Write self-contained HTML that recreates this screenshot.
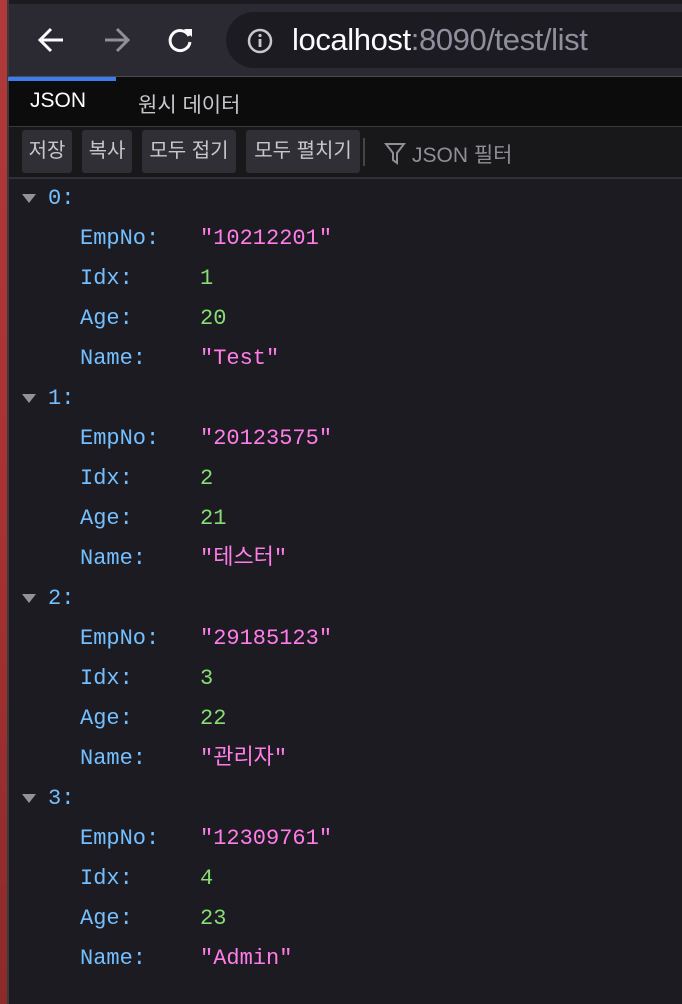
<!DOCTYPE html>
<html><head><meta charset="utf-8"><style>
*{margin:0;padding:0;box-sizing:border-box}
body{width:682px;height:1004px;background:#1c1b22;position:relative;overflow:hidden;font-family:"Liberation Sans","Noto Sans CJK KR",sans-serif}
.red{position:absolute;left:0;top:0;width:7px;height:1004px;background:linear-gradient(#b03a3a,#a83232 50%,#8c2a2a)}
.redl{position:absolute;left:7px;top:0;width:2px;height:1004px;background:#3a3a3e}
.top{position:absolute;left:9px;top:0;right:0;height:4px;background:#1c1b20}
.tb{position:absolute;left:9px;top:4px;right:0;height:72px;background:#2b2a33}
.url{position:absolute;left:226px;top:12px;width:500px;height:56px;border-radius:28px;background:#1c1b22}
.urltxt{position:absolute;left:292px;top:22px;font-size:31px;color:#fbfbfe;letter-spacing:-0.4px}
.urltxt span{color:#8f8f9d}
.sep1{position:absolute;left:9px;top:76px;right:0;height:1px;background:#4a4a50}
.tabs{position:absolute;left:9px;top:77px;right:0;height:49px;background:#0c0c0d}
.blue{position:absolute;left:8px;top:77px;width:108px;height:4px;background:#3c7bf0}
.tab{position:absolute;top:89px;font-size:21px}
.sep2{position:absolute;left:9px;top:126px;right:0;height:1px;background:#38383d}
.tools{position:absolute;left:9px;top:127px;right:0;height:50px;background:#18181b}
.btn{position:absolute;top:130px;height:43px;background:#2f2f35;border-radius:3px;color:#c8c8cc;font-size:20px;line-height:43px;text-align:center;white-space:nowrap}
.sep3{position:absolute;left:9px;top:177px;right:0;height:2px;background:#303036}
.row{position:absolute;font-family:"Liberation Mono","Noto Sans CJK KR",monospace;font-size:22px;line-height:24px}
.k{color:#75bfff}.s{color:#ff7de9}.n{color:#86de74}
.tri{position:absolute;width:0;height:0;border-left:7px solid transparent;border-right:7px solid transparent;border-top:9px solid #939395}
</style></head><body>
<div class="red"></div><div class="redl"></div><div class="top"></div>
<div class="tb"></div>
<svg style="position:absolute;left:36px;top:24px" width="32" height="32" viewBox="0 0 32 32"><path d="M27 16H5M15 5L4 16l11 11" stroke="#fbfbfe" stroke-width="3" fill="none"/></svg>
<svg style="position:absolute;left:100px;top:24px" width="32" height="32" viewBox="0 0 32 32"><path d="M5 16h22M17 5l11 11-11 11" stroke="#8f8f95" stroke-width="3" fill="none"/></svg>
<svg style="position:absolute;left:164px;top:24px" width="32" height="32" viewBox="0 0 32 32"><path d="M25 12A10 10 0 1 0 26 18" stroke="#fbfbfe" stroke-width="3" fill="none"/><path d="M20 5h8v8z" fill="#fbfbfe"/></svg>
<div class="url"></div>
<svg style="position:absolute;left:246px;top:27px" width="28" height="28" viewBox="0 0 28 28"><circle cx="14" cy="14" r="11" stroke="#c8c8cc" stroke-width="2.5" fill="none"/><rect x="12.6" y="12" width="2.8" height="8" fill="#c8c8cc"/><circle cx="14" cy="8.5" r="1.6" fill="#c8c8cc"/></svg>
<div class="urltxt">localhost<span>:8090/test/list</span></div>
<div class="sep1"></div>
<div class="tabs"></div><div class="blue"></div>
<div class="tab" style="left:30px;color:#fff">JSON</div>
<div class="tab" style="left:138px;color:#c8c8cc">원시 데이터</div>
<div class="sep2"></div><div class="tools"></div>
<div class="btn" style="left:22px;width:50px">저장</div>
<div class="btn" style="left:82px;width:50px">복사</div>
<div class="btn" style="left:142px;width:94px">모두 접기</div>
<div class="btn" style="left:246px;width:114px">모두 펼치기</div>
<div style="position:absolute;left:363px;top:138px;width:2px;height:28px;background:#444"></div>
<svg style="position:absolute;left:384px;top:142px" width="22" height="24" viewBox="0 0 22 24"><path d="M2 2h18l-7 9v10l-4-3v-7z" stroke="#8f8f95" stroke-width="2" fill="none"/></svg>
<div style="position:absolute;left:412px;top:139px;font-size:21px;color:#8f8f95">JSON 필터</div>
<div class="sep3"></div>

<div class="tri" style="left:22px;top:194px"></div><div class="row k" style="left:48px;top:187px">0:</div>
<div class="row k" style="left:80px;top:227px">EmpNo:</div><div class="row s" style="left:200px;top:227px">"10212201"</div>
<div class="row k" style="left:80px;top:267px">Idx:</div><div class="row n" style="left:200px;top:267px">1</div>
<div class="row k" style="left:80px;top:307px">Age:</div><div class="row n" style="left:200px;top:307px">20</div>
<div class="row k" style="left:80px;top:347px">Name:</div><div class="row s" style="left:200px;top:347px">"Test"</div>

<div class="tri" style="left:22px;top:394px"></div><div class="row k" style="left:48px;top:387px">1:</div>
<div class="row k" style="left:80px;top:427px">EmpNo:</div><div class="row s" style="left:200px;top:427px">"20123575"</div>
<div class="row k" style="left:80px;top:467px">Idx:</div><div class="row n" style="left:200px;top:467px">2</div>
<div class="row k" style="left:80px;top:507px">Age:</div><div class="row n" style="left:200px;top:507px">21</div>
<div class="row k" style="left:80px;top:547px">Name:</div><div class="row s" style="left:200px;top:547px">"테스터"</div>

<div class="tri" style="left:22px;top:594px"></div><div class="row k" style="left:48px;top:587px">2:</div>
<div class="row k" style="left:80px;top:627px">EmpNo:</div><div class="row s" style="left:200px;top:627px">"29185123"</div>
<div class="row k" style="left:80px;top:667px">Idx:</div><div class="row n" style="left:200px;top:667px">3</div>
<div class="row k" style="left:80px;top:707px">Age:</div><div class="row n" style="left:200px;top:707px">22</div>
<div class="row k" style="left:80px;top:747px">Name:</div><div class="row s" style="left:200px;top:747px">"관리자"</div>

<div class="tri" style="left:22px;top:794px"></div><div class="row k" style="left:48px;top:787px">3:</div>
<div class="row k" style="left:80px;top:827px">EmpNo:</div><div class="row s" style="left:200px;top:827px">"12309761"</div>
<div class="row k" style="left:80px;top:867px">Idx:</div><div class="row n" style="left:200px;top:867px">4</div>
<div class="row k" style="left:80px;top:907px">Age:</div><div class="row n" style="left:200px;top:907px">23</div>
<div class="row k" style="left:80px;top:947px">Name:</div><div class="row s" style="left:200px;top:947px">"Admin"</div>
</body></html>
